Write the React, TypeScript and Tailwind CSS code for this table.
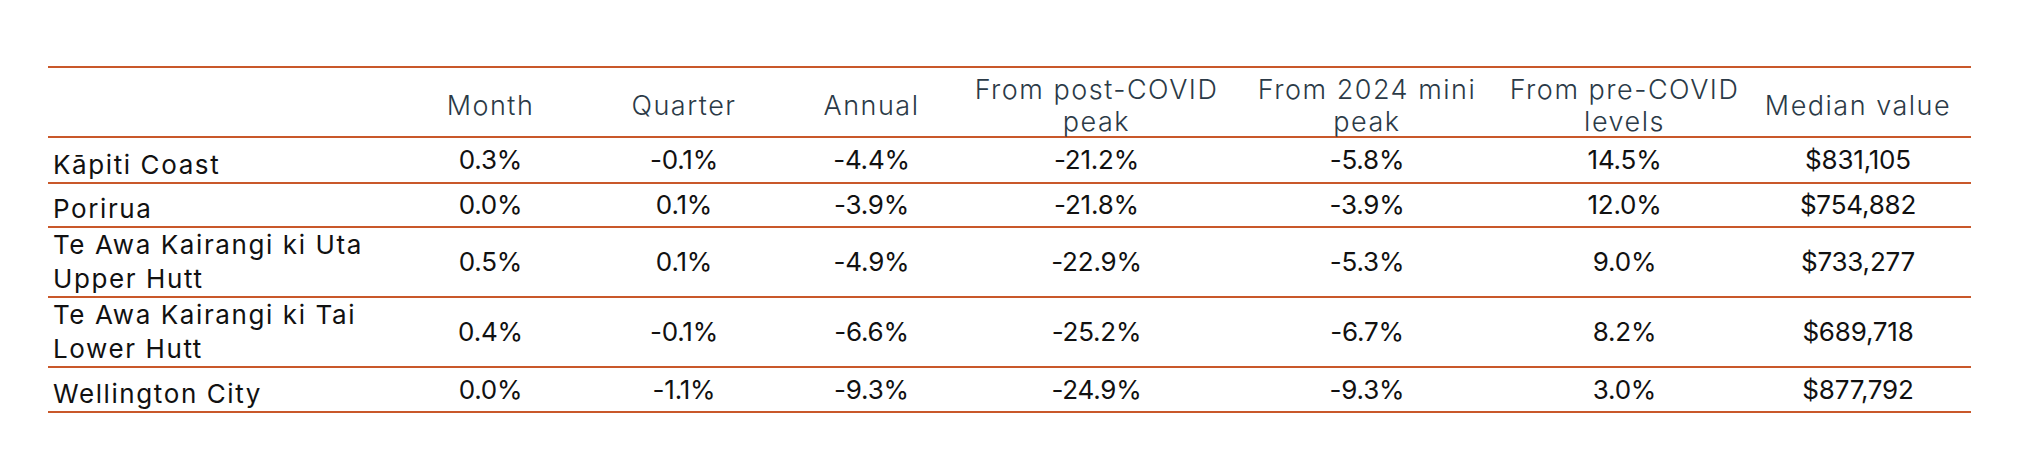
const headers: React.ReactNode[] = [
  '',
  'Month',
  'Quarter',
  'Annual',
  <>From post-COVID<br />peak</>,
  <>From 2024 mini<br />peak</>,
  <>From pre-COVID<br />levels</>,
  'Median value',
];

type Row = {
  name: React.ReactNode;
  h: string;
  values: string[];
};

const rows: Row[] = [
  { name: 'Kāpiti Coast', h: 'h-[46px]', values: ['0.3%', '-0.1%', '-4.4%', '-21.2%', '-5.8%', '14.5%', '$831,105'] },
  { name: 'Porirua', h: 'h-[44px]', values: ['0.0%', '0.1%', '-3.9%', '-21.8%', '-3.9%', '12.0%', '$754,882'] },
  { name: <>Te Awa Kairangi ki Uta<br />Upper Hutt</>, h: 'h-[70px]', values: ['0.5%', '0.1%', '-4.9%', '-22.9%', '-5.3%', '9.0%', '$733,277'] },
  { name: <>Te Awa Kairangi ki Tai<br />Lower Hutt</>, h: 'h-[70px]', values: ['0.4%', '-0.1%', '-6.6%', '-25.2%', '-6.7%', '8.2%', '$689,718'] },
  { name: 'Wellington City', h: 'h-[45px]', values: ['0.0%', '-1.1%', '-9.3%', '-24.9%', '-9.3%', '3.0%', '$877,792'] },
];

const cols = 'grid grid-cols-[345px_195px_192px_183px_267px_274px_241px_226px]';

export default function App() {
  return (
    <div className="w-[2036px] h-[451px] bg-white pt-[66px] pl-[48px] font-['Inter','Noto_Sans',sans-serif]">
      <div className="w-[1923px] border-t-2 border-[#c9582a]">
        <div className={`${cols} h-[70px] pt-[6px] border-b-2 border-[#c9582a] text-[27px] leading-[32px] tracking-[1.5px] font-light text-[#2b3a47]`}>
          {headers.map((h, i) => (
            <div key={i} className="flex items-center justify-center text-center whitespace-nowrap">
              {h}
            </div>
          ))}
        </div>
        {rows.map((r, i) => (
          <div key={i} className={`${cols} ${r.h} border-b-2 border-[#c9582a] text-[26px] text-[#111111]`}>
            <div className="flex items-end pl-[5px] leading-[34px] tracking-[1.6px] whitespace-nowrap">
              <span>{r.name}</span>
            </div>
            {r.values.map((v, j) => (
              <div key={j} className="flex items-center justify-center leading-[34px] tracking-[-0.2px]">
                {v}
              </div>
            ))}
          </div>
        ))}
      </div>
    </div>
  );
}
